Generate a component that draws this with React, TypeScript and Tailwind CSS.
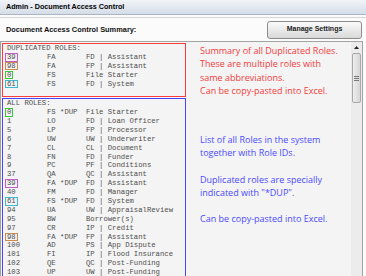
import React from 'react';

type Row = { id: string; abbr: string; name: string; mark?: string };

const dupRoles: Row[] = [
  { id: '39', abbr: 'FA', name: 'FD | Assistant', mark: 'border-[#c85ac8]' },
  { id: '98', abbr: 'FA', name: 'FP | Assistant', mark: 'border-[#d08a4c]' },
  { id: '0', abbr: 'FS', name: 'File Starter', mark: 'border-[#3cc83c]' },
  { id: '61', abbr: 'FS', name: 'FD | System', mark: 'border-[#3cb8d0]' },
];

const allRoles: Row[] = [
  { id: '0', abbr: 'FS *DUP', name: 'File Starter', mark: 'border-[#3cc83c]' },
  { id: '1', abbr: 'LO', name: 'FD | Loan Officer' },
  { id: '5', abbr: 'LP', name: 'FP | Processor' },
  { id: '6', abbr: 'UW', name: 'UW | Underwriter' },
  { id: '7', abbr: 'CL', name: 'CL | Document' },
  { id: '8', abbr: 'FN', name: 'FD | Funder' },
  { id: '9', abbr: 'PC', name: 'PF | Conditions' },
  { id: '37', abbr: 'QA', name: 'QC | Assistant' },
  { id: '39', abbr: 'FA *DUP', name: 'FD | Assistant', mark: 'border-[#c85ac8]' },
  { id: '40', abbr: 'FM', name: 'FD | Manager' },
  { id: '61', abbr: 'FS *DUP', name: 'FD | System', mark: 'border-[#3cb8d0]' },
  { id: '94', abbr: 'UA', name: 'UW | AppraisalReview' },
  { id: '95', abbr: 'BW', name: 'Borrower(s)' },
  { id: '97', abbr: 'CR', name: 'IP | Credit' },
  { id: '98', abbr: 'FA *DUP', name: 'FP | Assistant', mark: 'border-[#d08a4c]' },
  { id: '100', abbr: 'AD', name: 'PS | App Dispute' },
  { id: '101', abbr: 'FI', name: 'IP | Flood Insurance' },
  { id: '102', abbr: 'QE', name: 'QC | Post-Funding' },
  { id: '103', abbr: 'UP', name: 'UW | Post-Funding' },
];

const RoleLine: React.FC<{ row: Row }> = ({ row }) => (
  <div className="flex h-[8.9px] items-center whitespace-pre">
    <div className="w-[42px] shrink-0">
      <span
        className={`inline-block border px-[1px] leading-[6.6px] ${row.mark ?? 'border-transparent'}`}
      >
        {row.id}
      </span>
    </div>
    <div className="w-[39px] shrink-0">{row.abbr}</div>
    <div>{row.name}</div>
  </div>
);

const Header: React.FC<{ text: string }> = ({ text }) => (
  <div className="flex h-[8.9px] items-center whitespace-pre pl-[2px]">{text}</div>
);

export default function App() {
  return (
    <div className="w-[366px] h-[276px] overflow-hidden bg-[#fbfbfb] flex flex-col font-['Liberation_Sans',sans-serif]">
      <div className="h-[15px] shrink-0 flex items-center px-[6px] bg-gradient-to-b from-[#f1f4f8] to-[#d5dde7] border-b border-[#aab6c5]">
        <span className="text-[7.2px] font-bold text-black">Admin - Document Access Control</span>
      </div>

      <div className="mt-[2px] border-t border-[#d6d6d6] flex-1 flex flex-col">
        <div className="h-[23px] shrink-0 flex items-center justify-between pl-[6px] pr-[4px]">
          <span className="text-[7.4px] font-bold text-[#111]">Document Access Control Summary:</span>
          <button className="w-[95px] h-[18px] rounded-[3px] border border-[#8c8c8c] bg-gradient-to-b from-[#fbfbfb] to-[#d9d9d9] text-[7px] font-bold text-[#222]">
            Manage Settings
          </button>
        </div>

        <div className="w-[363px] flex-1 flex border border-[#a3a3a3] bg-[#f4f4f4]">
          <div className="flex-1 flex flex-col font-['Liberation_Mono',monospace] text-[7.25px] text-[#4e4e4e]">
            <div className="flex mt-[1px]">
              <div className="ml-[1px] w-[184px] shrink-0 border border-[#ff3c3c] pl-[2px] pb-[2.5px]">
                <Header text="DUPLICATED ROLES:" />
                {dupRoles.map(r => (
                  <RoleLine key={r.id} row={r} />
                ))}
              </div>
              <div className="ml-[14px] mt-[1px] font-['Open_Sans',sans-serif] text-[9px] leading-[13.3px] text-[#f23c3c]">
                <p>Summary of all Duplicated Roles.</p>
                <p>These are multiple roles with</p>
                <p>same abbreviations.</p>
                <p>Can be copy-pasted into Excel.</p>
              </div>
            </div>

            <div className="flex mt-[1px]">
              <div className="ml-[1px] w-[184px] shrink-0 border border-[#4646ff] pl-[2px] pb-[1px]">
                <Header text="ALL ROLES:" />
                {allRoles.map(r => (
                  <RoleLine key={r.id + r.abbr} row={r} />
                ))}
              </div>
              <div className="ml-[14px] mt-[35px] font-['Open_Sans',sans-serif] text-[9px] leading-[13.2px] text-[#4a4aff]">
                <p>List of all Roles in the system</p>
                <p>together with Role IDs.</p>
                <p>&nbsp;</p>
                <p>Duplicated roles are specially</p>
                <p>indicated with "*DUP".</p>
                <p>&nbsp;</p>
                <p>Can be copy-pasted into Excel.</p>
              </div>
            </div>
          </div>

          {/* scrollbar */}
          <div className="w-[12px] shrink-0 flex flex-col bg-[#ececec] border-l border-[#f6f6f6]">
            <div className="h-[11px] flex items-center justify-center">
              <svg width="5" height="3" viewBox="0 0 5 3">
                <path d="M0 3 L2.5 0 L5 3 Z" fill="#222" />
              </svg>
            </div>
            <div className="h-[50px] mx-[1px] rounded-[2px] border border-[#a8a8a8] bg-gradient-to-r from-[#eeeeee] to-[#d6d6d6] flex flex-col items-center justify-center gap-[1px]">
              <div className="w-[5px] h-[1px] bg-[#777]" />
              <div className="w-[5px] h-[1px] bg-[#777]" />
              <div className="w-[5px] h-[1px] bg-[#777]" />
            </div>
          </div>
        </div>
      </div>
    </div>
  );
}
